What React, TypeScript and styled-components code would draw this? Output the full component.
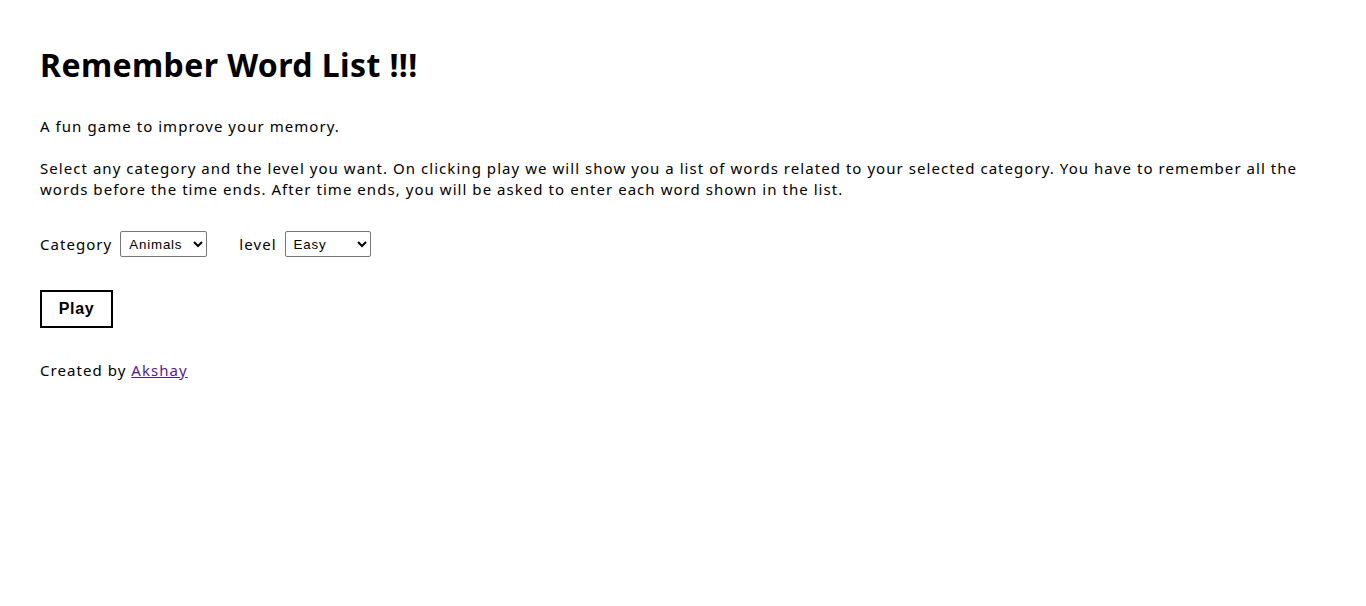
import styled, { createGlobalStyle } from "styled-components";

const GlobalStyle = createGlobalStyle`
  body {
    margin: 0;
    background: #fff;
    color: #000;
    font-family: "Noto Sans", "Open Sans", sans-serif;
  }
`;

const Page = styled.main`
  padding: 40px;
  letter-spacing: 1.05px;
`;

const Title = styled.h1`
  font-size: 32px;
  font-weight: 700;
  letter-spacing: 0.4px;
  margin: 0 0 29px;
  padding-top: 3px;
  line-height: 44px;
`;

const Para = styled.p`
  font-size: 15px;
  line-height: 21px;
  margin: 0 0 21px;
`;

const Controls = styled.div`
  display: flex;
  align-items: center;
  margin-top: 31px;
  gap: 8px;
  font-size: 15px;
`;

const Label = styled.label<{ $spaced?: boolean }>`
  margin-left: ${(p) => (p.$spaced ? "24px" : "0")};
`;

const Select = styled.select<{ $w: number }>`
  width: ${(p) => p.$w}px;
  height: 26px;
  font-family: "Liberation Sans", Arial, sans-serif;
  font-size: 13.33px;
  letter-spacing: 0.8px;
  border: 1px solid #767676;
  border-radius: 2px;
  background: #fff;
  color: #000;
  padding: 0 4px;
`;

const PlayButton = styled.button`
  display: block;
  margin-top: 33px;
  width: 73px;
  height: 38px;
  border: 2px solid #000;
  background: #fff;
  font-family: "Liberation Sans", Arial, sans-serif;
  font-weight: 700;
  font-size: 16px;
  letter-spacing: 0.6px;
  color: #000;
  cursor: pointer;
`;

const Footer = styled.p`
  font-size: 15px;
  margin: 32px 0 0;
  line-height: 21px;

  a {
    color: #551a8b;
  }
`;

export default function App() {
  return (
    <>
      <GlobalStyle />
      <Page>
        <Title>Remember Word List !!!</Title>
        <Para>A fun game to improve your memory.</Para>
        <Para>
          Select any category and the level you want. On clicking play we will
          show you a list of words related to your selected category. You have
          to remember all the words before the time ends. After time ends, you
          will be asked to enter each word shown in the list.
        </Para>
        <Controls>
          <Label htmlFor="category">Category</Label>
          <Select id="category" $w={87} defaultValue="Animals">
            <option>Animals</option>
            <option>Fruits</option>
            <option>Countries</option>
          </Select>
          <Label htmlFor="level" $spaced>
            level
          </Label>
          <Select id="level" $w={86} defaultValue="Easy">
            <option>Easy</option>
            <option>Medium</option>
            <option>Hard</option>
          </Select>
        </Controls>
        <PlayButton>Play</PlayButton>
        <Footer>
          Created by <a href="#">Akshay</a>
        </Footer>
      </Page>
    </>
  );
}
